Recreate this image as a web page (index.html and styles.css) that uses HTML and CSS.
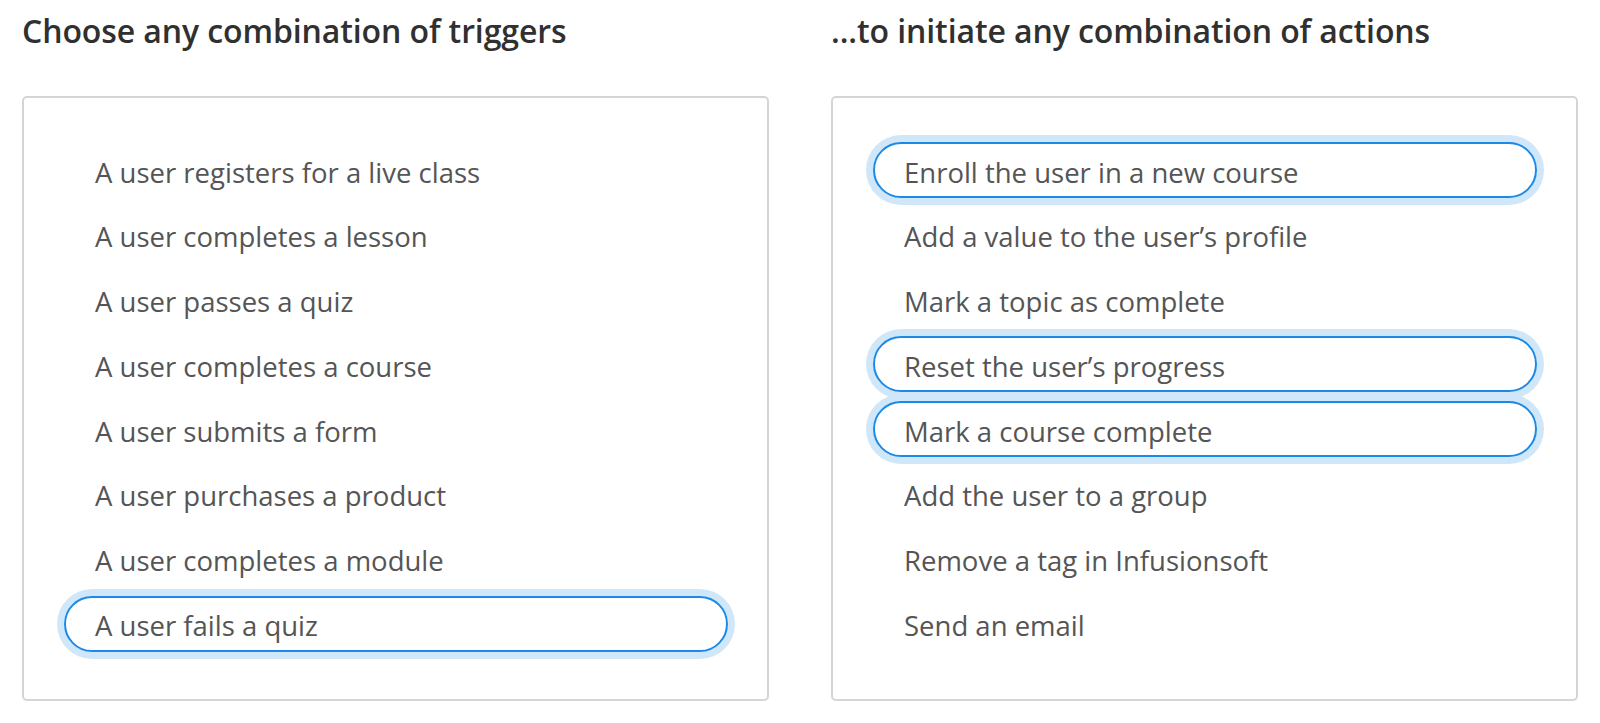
FILE: index.html
```html
<!DOCTYPE html>
<html lang="en">
<head>
<meta charset="utf-8">
<title>Triggers and actions</title>
<link rel="stylesheet" href="styles.css">
</head>
<body>
<div class="page">
  <section class="column">
    <h2 class="heading">Choose any combination of triggers</h2>
    <div class="box">
      <ul class="list">
        <li class="item">A user registers for a live class</li>
        <li class="item">A user completes a lesson</li>
        <li class="item">A user passes a quiz</li>
        <li class="item">A user completes a course</li>
        <li class="item">A user submits a form</li>
        <li class="item">A user purchases a product</li>
        <li class="item">A user completes a module</li>
        <li class="item selected">A user fails a quiz</li>
      </ul>
    </div>
  </section>
  <section class="column">
    <h2 class="heading">...to initiate any combination of actions</h2>
    <div class="box">
      <ul class="list">
        <li class="item selected">Enroll the user in a new course</li>
        <li class="item">Add a value to the user’s profile</li>
        <li class="item">Mark a topic as complete</li>
        <li class="item selected">Reset the user’s progress</li>
        <li class="item selected">Mark a course complete</li>
        <li class="item">Add the user to a group</li>
        <li class="item">Remove a tag in Infusionsoft</li>
        <li class="item">Send an email</li>
      </ul>
    </div>
  </section>
</div>
</body>
</html>
```

FILE: styles.css
```css
html, body {
  margin: 0;
  padding: 0;
  background: #ffffff;
}

body {
  font-family: "Open Sans", "Noto Sans", "Liberation Sans", sans-serif;
}

.page {
  display: grid;
  grid-template-columns: 747px 747px;
  column-gap: 62px;
  padding: 0 22px;
}

.column {
  display: flex;
  flex-direction: column;
}

.heading {
  margin: 0;
  padding-top: 10px;
  height: 96px;
  box-sizing: border-box;
  font-size: 32px;
  line-height: 42px;
  font-weight: 600;
  color: #303030;
  letter-spacing: -0.1px;
}

.box {
  box-sizing: border-box;
  height: 605px;
  border: 2px solid #d5d5d5;
  border-radius: 5px;
  padding: 44px 39px 46px 40px;
}

.list {
  list-style: none;
  margin: 0;
  padding: 0;
  display: grid;
  grid-auto-rows: 56px;
  row-gap: 8.8px;
}

.item {
  box-sizing: border-box;
  display: flex;
  align-items: center;
  height: 56px;
  padding: 4px 0 0 29px;
  border: 2px solid transparent;
  border-radius: 28px;
  font-size: 27.5px;
  color: #555555;
  white-space: nowrap;
}

.item.selected {
  border-color: #1a8ae6;
  box-shadow: 0 0 0 7px #cfe7f9;
}
```
